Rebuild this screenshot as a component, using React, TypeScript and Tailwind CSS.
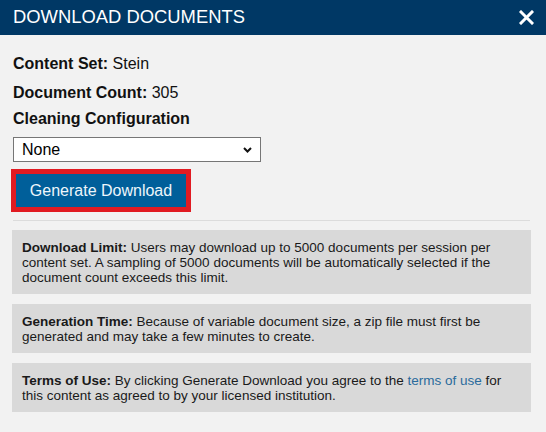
export default function App() {
  return (
    <div className="h-[432px] w-[546px] bg-[#f2f2f2] font-['Liberation_Sans',Arial,sans-serif] text-[#111]">
      <div className="flex h-[35px] items-center justify-between bg-[#003865] pl-[13px] pr-[10px]">
        <h2 className="text-[18.4px] leading-none text-white">DOWNLOAD DOCUMENTS</h2>
        <button className="flex h-[20px] w-[20px] items-center justify-center text-white" aria-label="Close">
          <svg width="15" height="15" viewBox="0 0 15 15">
            <path d="M2 2L13 13M13 2L2 13" stroke="currentColor" strokeWidth="3" strokeLinecap="square" />
          </svg>
        </button>
      </div>

      <div className="px-[13px] pt-[19px]">
        <p className="text-[16px] leading-[20px]">
          <b>Content Set:</b> Stein
        </p>
        <p className="mt-[9px] text-[16px] leading-[20px]">
          <b>Document Count:</b> 305
        </p>
        <label htmlFor="cleaning" className="mt-[6px] block text-[16px] font-bold leading-[20px]">
          Cleaning Configuration
        </label>
        <div className="relative mt-[8px] w-[248px]">
          <select
            id="cleaning"
            className="block h-[25px] w-full appearance-none border border-[#767676] bg-white pl-[8px] text-[16px] leading-none text-black"
          >
            <option>None</option>
          </select>
          <svg className="pointer-events-none absolute right-[9px] top-[10px]" width="9" height="6" viewBox="0 0 9 6">
            <path d="M1 1L4.5 4.5L8 1" stroke="#111" strokeWidth="2" fill="none" />
          </svg>
        </div>
        <div className="mt-[7px] ml-[-2px] inline-block border-[5px] border-[#e11b22]">
          <button className="block h-[33px] w-[170px] bg-[#005f9a] text-[16px] text-[#eef6fb]">Generate Download</button>
        </div>

        <div className="mt-[8px] h-px w-[517px] bg-[#dcdcdc]" />

        <div className="mt-[9px] ml-[-1px] flex w-[519px] flex-col gap-[10px] text-[13.5px] leading-[15px] text-[#1a1a1a]">
          <div className="bg-[#d9d9d9] px-[10px] pb-[9px] pt-[10px]">
            <b>Download Limit:</b> Users may download up to 5000 documents per session per content set. A sampling of
            5000 documents will be automatically selected if the document count exceeds this limit.
          </div>
          <div className="bg-[#d9d9d9] px-[10px] pb-[9px] pt-[10px]">
            <b>Generation Time:</b> Because of variable document size, a zip file must first be generated and may take a
            few minutes to create.
          </div>
          <div className="bg-[#d9d9d9] px-[10px] pb-[9px] pt-[10px]">
            <b>Terms of Use:</b> By clicking Generate Download you agree to the{' '}
            <a href="#" className="text-[#2a6b9c]">
              terms of use
            </a>{' '}
            for this content as agreed to by your licensed institution.
          </div>
        </div>
      </div>
    </div>
  )
}
